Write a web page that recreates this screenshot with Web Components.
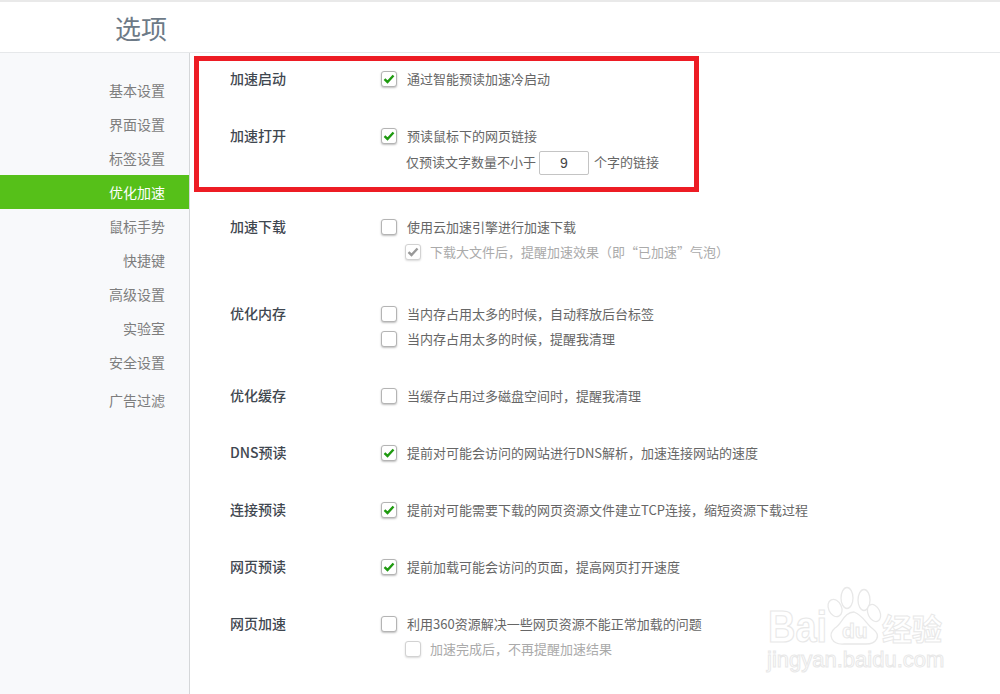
<!DOCTYPE html>
<html lang="zh">
<head>
<meta charset="utf-8">
<title>选项</title>
<style>
    html, body { margin: 0; height: 100%; background: #fff; overflow: hidden; }
    body { font-family: "Noto Sans CJK SC", "Liberation Sans", sans-serif; color: #666; }
</style>
</head>
<body>
<options-page>
    <options-header slot="header">选项</options-header>
    <options-sidebar slot="sidebar"></options-sidebar>

    <options-section label="加速启动" top="17">
        <options-check checked>通过智能预读加速冷启动</options-check>
    </options-section>
    <options-section label="加速打开" top="39">
        <options-check checked>预读鼠标下的网页链接</options-check>
        <div style="display:flex;align-items:center;height:26px;margin-top:-2px;padding-left:25px">
            <span style="margin-top:-3px">仅预读文字数量不小于</span><options-number value="9"></options-number><span style="margin-top:-3px">个字的链接</span>
        </div>
    </options-section>
    <options-section label="加速下载" top="42">
        <options-check>使用云加速引擎进行加速下载</options-check>
        <options-check sub checked>下载大文件后，提醒加速效果（即“已加速”气泡）</options-check>
    </options-section>
    <options-section label="优化内存" top="44">
        <options-check>当内存占用太多的时候，自动释放后台标签</options-check>
        <options-check>当内存占用太多的时候，提醒我清理</options-check>
    </options-section>
    <options-section label="优化缓存" top="39">
        <options-check>当缓存占用过多磁盘空间时，提醒我清理</options-check>
    </options-section>
    <options-section label="DNS预读" top="39">
        <options-check checked>提前对可能会访问的网站进行DNS解析，加速连接网站的速度</options-check>
    </options-section>
    <options-section label="连接预读" top="39">
        <options-check checked>提前对可能需要下载的网页资源文件建立TCP连接，缩短资源下载过程</options-check>
    </options-section>
    <options-section label="网页预读" top="39">
        <options-check checked>提前加载可能会访问的页面，提高网页打开速度</options-check>
    </options-section>
    <options-section label="网页加速" top="39">
        <options-check>利用360资源解决一些网页资源不能正常加载的问题</options-check>
        <options-check sub>加速完成后，不再提醒加速结果</options-check>
    </options-section>

    <red-frame slot="overlay"></red-frame>
    <baidu-mark slot="overlay"></baidu-mark>
</options-page>

<script>
class OptionsPage extends HTMLElement {
    constructor() {
        super();
        this.attachShadow({mode: "open"});
        this.shadowRoot.innerHTML = /*html*/`
            <style>
                :host {
                    display: grid;
                    grid-template-columns: 190px 1fr;
                    grid-template-rows: 53px 641px;
                    height: 694px;
                    position: relative;
                    overflow: hidden;
                }
                .header { grid-column: 1 / 3; }
                .main { padding-left: 40px; }
            </style>
            <div class="header"><slot name="header"></slot></div>
            <slot name="sidebar"></slot>
            <div class="main"><slot></slot></div>
            <slot name="overlay"></slot>
        `;
    }
}

class OptionsHeader extends HTMLElement {
    constructor() {
        super();
        this.attachShadow({mode: "open"});
        this.shadowRoot.innerHTML = /*html*/`
            <style>
                :host {
                    display: flex;
                    align-items: center;
                    box-sizing: border-box;
                    height: 53px;
                    padding: 0 0 0 115px;
                    border-top: 2px solid #e9e9e9;
                    border-bottom: 1px solid #e6e8ea;
                    font-size: 26px;
                    color: #6d7a87;
                }
            </style>
            <slot></slot>
        `;
    }
}

class OptionsSidebar extends HTMLElement {
    constructor() {
        super();
        this.attachShadow({mode: "open"});
        const items = ['基本设置', '界面设置', '标签设置', '优化加速', '鼠标手势', '快捷键', '高级设置', '实验室', '安全设置', '广告过滤'];
        this.shadowRoot.innerHTML = /*html*/`
            <style>
                :host {
                    display: block;
                    box-sizing: border-box;
                    background: #f8f9fb;
                    border-right: 1px solid #d5d7d9;
                    padding-top: 20px;
                    font-size: 14px;
                    color: #7d7d7d;
                }
                .item {
                    height: 34px;
                    line-height: 34px;
                    padding-right: 24px;
                    text-align: right;
                }
                .item.active { background: #56c019; color: #fff; }
                .item:last-child { margin-top: 4px; }
            </style>
            ${items.map(item => `<div class="item${item === '优化加速' ? ' active' : ''}">${item}</div>`).join('')}
        `;
    }
}

class OptionsSection extends HTMLElement {
    constructor() {
        super();
        this.attachShadow({mode: "open"});
        this.shadowRoot.innerHTML = /*html*/`
            <style>
                :host {
                    display: grid;
                    grid-template-columns: 151px 1fr;
                    font-size: 13px;
                    color: #666;
                }
                .label {
                    font-size: 14px;
                    font-weight: 500;
                    color: #3f4750;
                    line-height: 16px;
                }
            </style>
            <div class="label"></div>
            <div class="body"><slot></slot></div>
        `;
    }

    connectedCallback() {
        this.shadowRoot.querySelector('.label').textContent = this.getAttribute('label');
        this.style.paddingTop = this.getAttribute('top') + 'px';
    }
}

class OptionsCheck extends HTMLElement {
    constructor() {
        super();
        this.attachShadow({mode: "open"});
        this.shadowRoot.innerHTML = /*html*/`
            <style>
                :host {
                    display: flex;
                    align-items: center;
                    gap: 10px;
                    height: 18px;
                    margin-bottom: 7px;
                    white-space: nowrap;
                }
                :host(:last-child) { margin-bottom: 0; }
                :host([sub]) { padding-left: 24px; gap: 9px; color: #aaa; }
                .text { margin-top: -2px; }
                .box {
                    box-sizing: border-box;
                    flex: none;
                    width: 16px;
                    height: 16px;
                    border: 1px solid #b4b4b4;
                    border-radius: 3px;
                    background: #fff;
                    box-shadow: 0 1px 2px rgba(0, 0, 0, .25);
                    display: flex;
                    align-items: center;
                    justify-content: center;
                }
                svg { display: none; }
                :host([checked]) svg { display: block; }
                :host([sub]) .box { border-color: #d2d2d2; box-shadow: 0 1px 2px rgba(0, 0, 0, .15); }
                :host([sub]) path { stroke: #999; }
            </style>
            <span class="box"><svg width="12" height="10" viewBox="0 0 12 10"><path d="M1.5 5.2 L4.5 8 L10.5 1.5" fill="none" stroke="#1f9a10" stroke-width="2.4"/></svg></span>
            <span class="text"><slot></slot></span>
        `;
    }
}

class OptionsNumber extends HTMLElement {
    constructor() {
        super();
        this.attachShadow({mode: "open"});
        this.shadowRoot.innerHTML = /*html*/`
            <style>
                :host {
                    display: block;
                    box-sizing: border-box;
                    width: 50px;
                    height: 24px;
                    line-height: 22px;
                    margin: 0 5px 0 3px;
                    border: 1px solid #c4c4c4;
                    border-radius: 2px;
                    text-align: center;
                    color: #444;
                    font-family: "Liberation Sans", sans-serif;
                    font-size: 14px;
                }
            </style>
            <span></span>
        `;
    }

    connectedCallback() {
        this.shadowRoot.querySelector('span').textContent = this.getAttribute('value');
    }
}

// annotation drawn over the screenshot
class RedFrame extends HTMLElement {
    constructor() {
        super();
        this.attachShadow({mode: "open"});
        this.shadowRoot.innerHTML = /*html*/`
            <style>
                :host {
                    position: absolute;
                    left: 194px;
                    top: 56px;
                    width: 505px;
                    height: 136px;
                    box-sizing: border-box;
                    border: 5px solid #ed1c24;
                    pointer-events: none;
                }
            </style>
        `;
    }
}

class BaiduMark extends HTMLElement {
    constructor() {
        super();
        this.attachShadow({mode: "open"});
        this.shadowRoot.innerHTML = /*html*/`
            <style>
                :host {
                    position: absolute;
                    left: 760px;
                    top: 580px;
                    width: 200px;
                    height: 100px;
                    font-family: "Liberation Sans", sans-serif;
                    color: #fff;
                    -webkit-text-stroke: 1px #e8e8e8;
                }
                svg { position: absolute; left: 0; top: 0; }
                span { position: absolute; white-space: nowrap; line-height: 1; }
                .bai { left: 8px; top: 30px; font-size: 38px; font-weight: 700; transform: scaleY(1.15); transform-origin: 0 86%; }
                .du { left: 82px; top: 40px; font-size: 21px; font-weight: 700; }
                .cn { left: 122px; top: 32px; font-size: 30px; line-height: 30px; font-weight: 700; font-family: "Noto Sans CJK SC", sans-serif; }
                .url { left: 7px; top: 69px; font-size: 22px; }
            </style>
            <svg width="200" height="100" viewBox="0 0 200 100" fill="#fff" stroke="#e8e8e8" stroke-width="1.3">
                <ellipse cx="75" cy="28" rx="6.5" ry="9" transform="rotate(-25 75 28)"/>
                <ellipse cx="87" cy="18" rx="6" ry="10.5"/>
                <ellipse cx="104" cy="20" rx="6" ry="10.5"/>
                <ellipse cx="114" cy="33" rx="6" ry="9" transform="rotate(-25 114 33)"/>
                <path d="M94 32 C104 36 106 44 113 49 C122 56 116 64 106 64 L84 64 C72 65 67 55 75 48 C82 44 84 32 94 32 Z"/>
            </svg>
            <span class="bai">Bai</span>
            <span class="du">du</span>
            <span class="cn">经验</span>
            <span class="url">jingyan.baidu.com</span>
        `;
    }
}

customElements.define('options-page', OptionsPage);
customElements.define('options-header', OptionsHeader);
customElements.define('options-sidebar', OptionsSidebar);
customElements.define('options-section', OptionsSection);
customElements.define('options-check', OptionsCheck);
customElements.define('options-number', OptionsNumber);
customElements.define('red-frame', RedFrame);
customElements.define('baidu-mark', BaiduMark);
</script>
</body>
</html>
